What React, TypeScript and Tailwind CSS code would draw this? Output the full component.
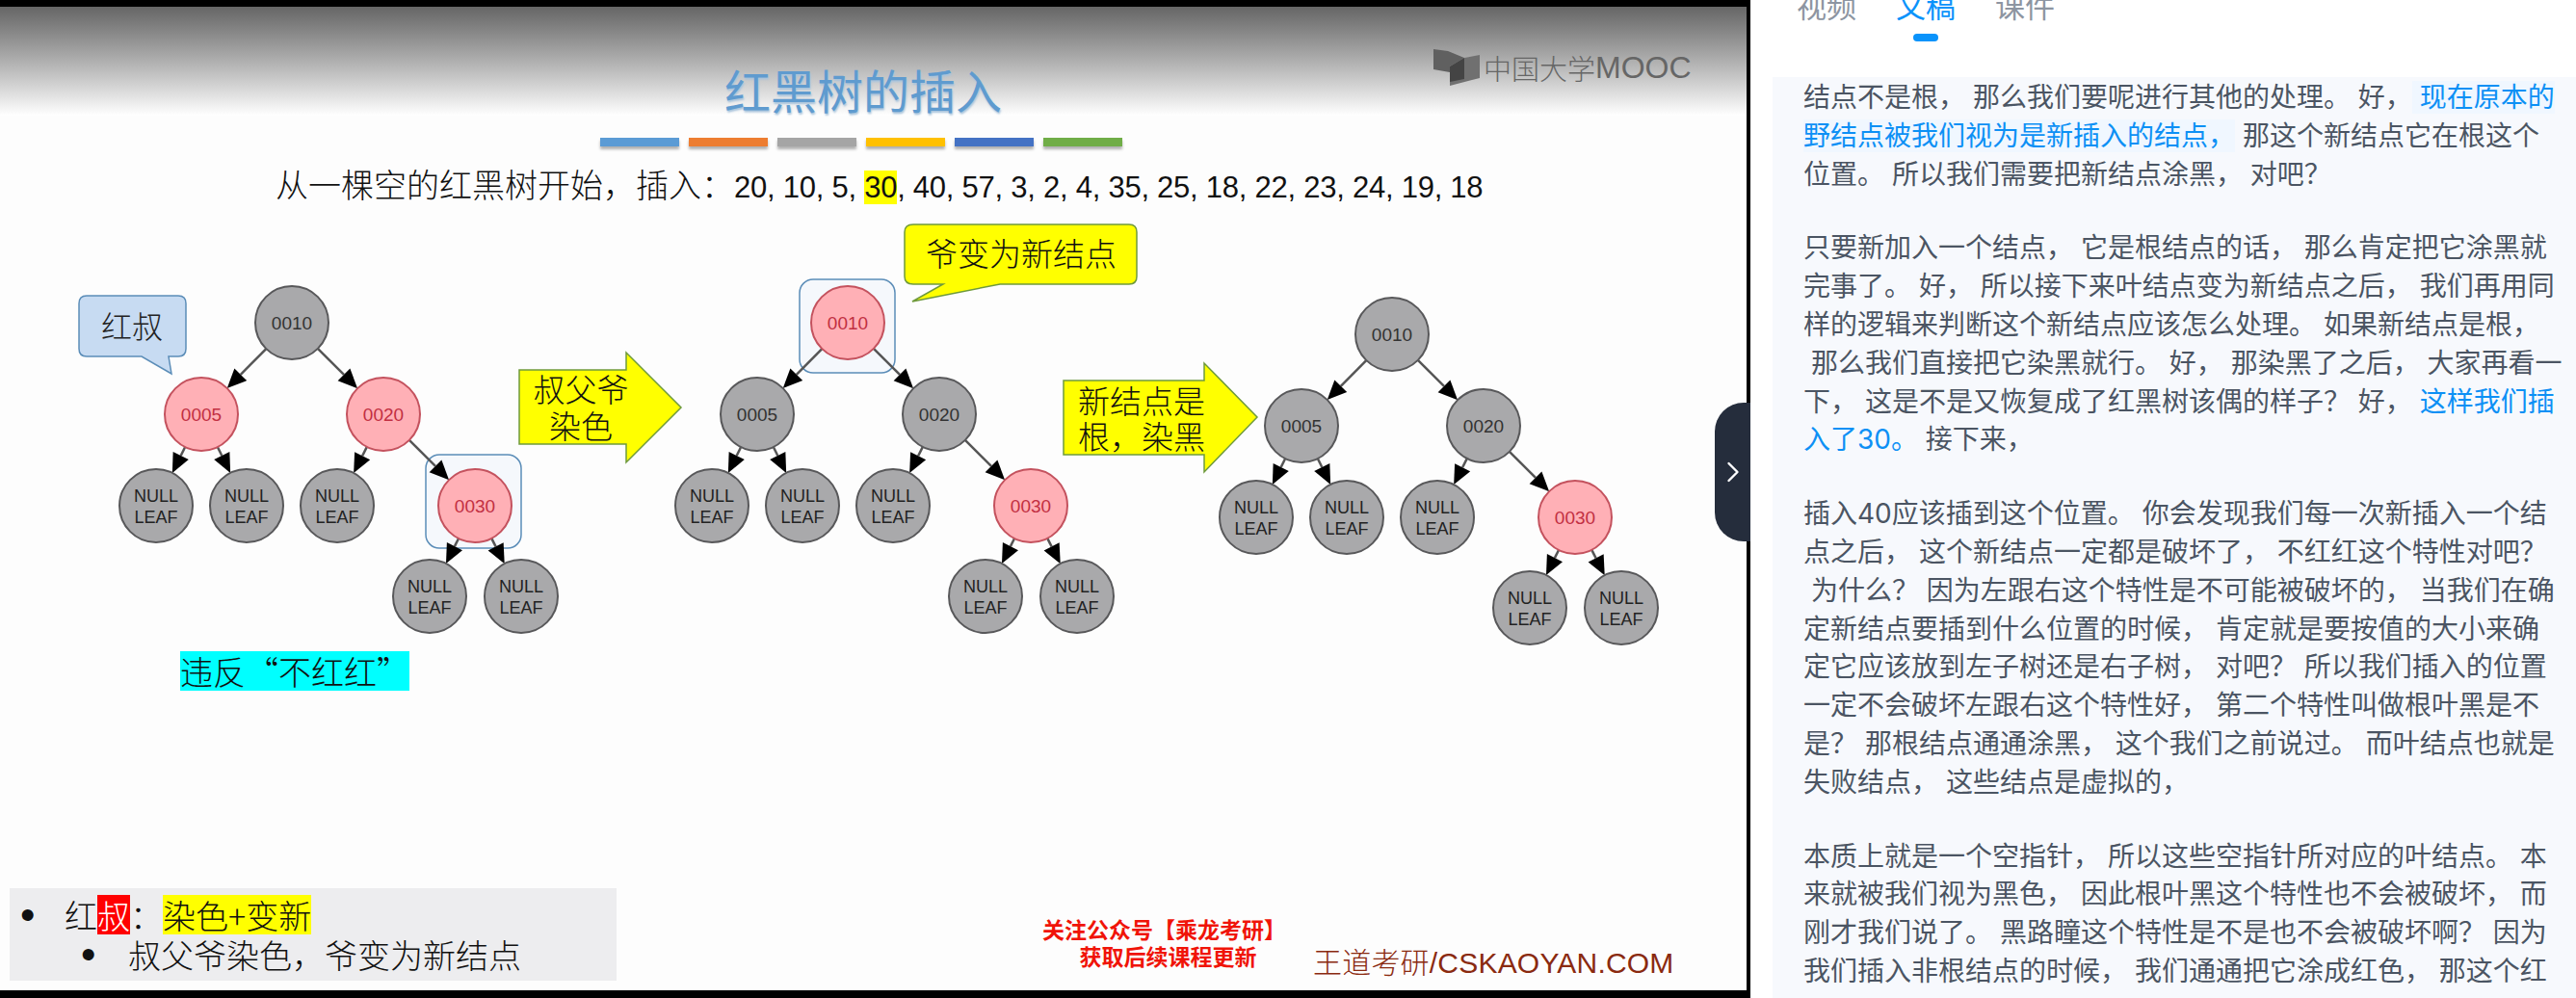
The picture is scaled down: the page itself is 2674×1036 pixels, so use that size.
import { ChevronRight } from "lucide-react";

const CJK = "font-['Noto_Sans_CJK_SC',sans-serif]";
const BODY = "font-['Inter','Noto_Sans_CJK_SC',sans-serif]";
const LATIN = "font-['Liberation_Sans','Noto_Sans_CJK_SC',sans-serif]";

const BARS = ["bg-[#5b9bd5]", "bg-[#ed7d31]", "bg-[#a5a5a5]", "bg-[#ffc000]", "bg-[#4472c4]", "bg-[#70ad47]"];

const R = 38;

// offsets from the root, the three trees share one shape
const TREE = [
  { id: "0010", x: 0, y: 0 },
  { id: "0005", x: -94, y: 95, parent: "0010" },
  { id: "0020", x: 95, y: 95, parent: "0010" },
  { id: "a", x: -141, y: 190, parent: "0005", leaf: true },
  { id: "b", x: -47, y: 190, parent: "0005", leaf: true },
  { id: "c", x: 47, y: 190, parent: "0020", leaf: true },
  { id: "0030", x: 190, y: 190, parent: "0020" },
  { id: "d", x: 143, y: 284, parent: "0030", leaf: true },
  { id: "e", x: 238, y: 284, parent: "0030", leaf: true },
];

// ascii punctuation to the full-width forms the transcript uses
function zh(s: string) {
  return s.replaceAll(",", "\uFF0C").replaceAll("?", "\uFF1F").replaceAll(":", "\uFF1A");
}

function Edge({ x1, y1, x2, y2 }: { x1: number; y1: number; x2: number; y2: number }) {
  const len = Math.hypot(x2 - x1, y2 - y1);
  const ux = (x2 - x1) / len;
  const uy = (y2 - y1) / len;
  const tipX = x2 - ux * R;
  const tipY = y2 - uy * R;
  const baseX = tipX - ux * 20;
  const baseY = tipY - uy * 20;
  const head = `${tipX},${tipY} ${baseX - uy * 9},${baseY + ux * 9} ${baseX + uy * 9},${baseY - ux * 9}`;
  return (
    <g>
      <line x1={x1 + ux * R} y1={y1 + uy * R} x2={baseX} y2={baseY} stroke="#555" strokeWidth={2.5} />
      <polygon points={head} fill="#000" />
    </g>
  );
}

function Tree({ x, y, red }: { x: number; y: number; red: string[] }) {
  return (
    <g>
      {TREE.filter((n) => n.parent).map((n) => {
        const p = TREE.find((m) => m.id === n.parent)!;
        return <Edge key={n.id} x1={x + p.x} y1={y + p.y} x2={x + n.x} y2={y + n.y} />;
      })}
      {TREE.map((n) => {
        const isRed = red.includes(n.id);
        const cx = x + n.x;
        const cy = y + n.y;
        return (
          <g key={n.id}>
            <circle cx={cx} cy={cy} r={R} fill={isRed ? "#ffb0b6" : "#a9a9ab"} stroke={isRed ? "#c4525e" : "#58585a"} strokeWidth={2} />
            {n.leaf ? (
              <text textAnchor="middle" className={`${LATIN} text-[18px]`} fill="#222">
                <tspan x={cx} y={cy - 4}>NULL</tspan>
                <tspan x={cx} y={cy + 18}>LEAF</tspan>
              </text>
            ) : (
              <text x={cx} y={cy + 7} textAnchor="middle" className={`${LATIN} text-[19px]`} fill={isRed ? "#c22f42" : "#333"}>
                {n.id}
              </text>
            )}
          </g>
        );
      })}
    </g>
  );
}

function Diagram() {
  return (
    <svg className="absolute left-0 top-0" width={1813} height={1036}>
      {/* selection boxes */}
      <rect x={442} y={472} width={99} height={97} rx={14} fill="#f5f8fc" stroke="#5b8db8" strokeWidth={1.5} />
      <rect x={830} y={290} width={99} height={97} rx={14} fill="#f5f8fc" stroke="#5b8db8" strokeWidth={1.5} />

      <Tree x={303} y={335} red={["0005", "0020", "0030"]} />
      <Tree x={880} y={335} red={["0010", "0030"]} />
      <Tree x={1445} y={347} red={["0030"]} />

      {/* callouts */}
      <path
        d="M90 307H185Q193 307 193 315V362Q193 370 185 370H175L178 388L147 370H90Q82 370 82 362V315Q82 307 90 307Z"
        fill="#c7dbf2"
        stroke="#5b8db8"
        strokeWidth={1.5}
      />
      <text x={137} y={351} textAnchor="middle" className={`${CJK} text-[32px] font-light`} fill="#222">红叔</text>

      <path
        d="M948 233H1172Q1180 233 1180 241V287Q1180 295 1172 295H1038L947 313L979 295H948Q939 295 939 287V241Q939 233 948 233Z"
        fill="#ffff00"
        stroke="#6f9a3c"
        strokeWidth={1.5}
      />
      <text x={1060} y={276} textAnchor="middle" className={`${CJK} text-[33px] font-light`} fill="#111">爷变为新结点</text>

      {/* block arrows */}
      <polygon points="539,384 650,384 650,366 707,423 650,480 650,461 539,461" fill="#ffff00" stroke="#6f9a3c" strokeWidth={1.5} />
      <text textAnchor="middle" className={`${CJK} text-[33px] font-light`} fill="#111">
        <tspan x={603} y={417}>叔父爷</tspan>
        <tspan x={603} y={455}>染色</tspan>
      </text>

      <polygon points="1104,395 1250,395 1250,377 1305,433 1250,490 1250,472 1104,472" fill="#ffff00" stroke="#6f9a3c" strokeWidth={1.5} />
      <text textAnchor="middle" className={`${CJK} text-[33px] font-light`} fill="#111">
        <tspan x={1185} y={429}>新结点是</tspan>
        <tspan x={1185} y={466}>{zh("根,染黑")}</tspan>
      </text>
    </svg>
  );
}

function MoocLogo() {
  return (
    <div className="absolute left-[1488px] top-[43px] flex items-center gap-[3px] text-[#666]">
      <svg width={49} height={40} viewBox="0 0 49 40">
        <polygon points="0,1 15,3 32,10 17,19 17,25 0,22" fill="#606060" />
        <polygon points="48,7 48,31 17,39 17,19 32,10" fill="#707070" />
        <polygon points="32,10 32,32 17,35 17,19" fill="#444" />
      </svg>
      <span className={`${CJK} text-[29px] font-light leading-[34px]`}>中国大学</span>
      <span className={`${LATIN} -ml-[3px] text-[32px] leading-[34px]`}>MOOC</span>
    </div>
  );
}

function Slide() {
  return (
    <div className="relative flex h-full flex-col justify-between overflow-hidden bg-[#fdfdfd]">
      <div className="absolute inset-x-0 top-0 h-[113px] bg-linear-to-b from-[#666] to-white" />

      <div className="relative flex flex-col items-start">
        <h1 className={`${CJK} ml-[752px] mt-[61px] text-[48px] font-normal leading-[48px] text-[#5f9bcf] [text-shadow:1px_2px_2px_#a9c4dc]`}>
          红黑树的插入
        </h1>
        <div className="ml-[623px] mt-[27px] flex gap-[10px]">
          {BARS.map((c) => (
            <div key={c} className={`h-[9px] w-[82px] shadow-[0_3px_3px_#b0b0b0] ${c}`} />
          ))}
        </div>
        <p className={`${LATIN} ml-[286px] mt-[18px] whitespace-nowrap text-[31px] leading-[42px] tracking-[-0.25px] text-[#111]`}>
          <span className={`${CJK} text-[34px] font-light tracking-normal`}>{zh("从一棵空的红黑树开始,插入:")}</span>
          20, 10, 5, <span className="bg-[#ffff00]">30</span>, 40, 57, 3, 2, 4, 35, 25, 18, 22, 23, 24, 19, 18
        </p>
      </div>

      <MoocLogo />

      <div className={`${CJK} absolute left-[187px] top-[669px] h-[41px] whitespace-nowrap bg-[#00ffff] text-[34px] font-light leading-[41px] text-[#111]`}>
        违反“不红红”
      </div>

      <div className="relative flex items-end">
        <div className={`${CJK} mb-[10px] ml-[10px] h-[96px] w-[630px] bg-[#ededef] pt-[7px] text-[34px] font-light leading-[41px] text-[#111]`}>
          <div className="flex">
            <span className={`${LATIN} ml-[11px] w-[46px] text-[44px]`}>•</span>
            <span>红</span>
            <span className="bg-[#ff0000] text-white">叔</span>
            <span>{zh(":")}</span>
            <span className="bg-[#ffff00]">染色+变新</span>
          </div>
          <div className="flex">
            <span className={`${LATIN} ml-[74px] w-[49px] text-[44px]`}>•</span>
            <span>{zh("叔父爷染色,爷变为新结点")}</span>
          </div>
        </div>
        <div className={`${CJK} mb-[22px] ml-[442px] text-center text-[23px] font-bold leading-[28px] text-[#f01408]`}>
          关注公众号【乘龙考研】
          <br />
          <span className="ml-[8px]">获取后续课程更新</span>
        </div>
        <div className={`${LATIN} mb-[10px] ml-[28px] whitespace-nowrap text-[30px] leading-[36px] tracking-[0.2px] text-[#8a2a10]`}>
          <span className={`${CJK} font-light`}>王道考研</span>/CSKAOYAN.COM
        </div>
      </div>
    </div>
  );
}

function Tabs() {
  return (
    <div className={`${BODY} -mt-[13px] ml-[48px] flex gap-[41px] text-[31px] leading-[40px] text-[#8d95a1]`}>
      <div>视频</div>
      <div className="flex flex-col items-center text-[#0a93fb]">
        文稿
        <div className="mt-[8px] h-[8px] w-[26px] rounded-full bg-[#0a93fb]" />
      </div>
      <div>课件</div>
    </div>
  );
}

function Transcript() {
  const blue = "text-[#0d90f5]";
  return (
    <div className={`${BODY} ml-[23px] mt-[37px] min-h-0 flex-1 overflow-hidden bg-[#f7f9fd] pl-[32px] pt-[2px] text-[28px] leading-[39.8px] text-[#4b5563]`}>
      <p className="mb-[37px] whitespace-pre">
        {zh("结点不是根, 那么我们要呢进行其他的处理。 好,")}
        <span className={`${blue} bg-[#f0f7ff]`}>{zh(" 现在原本的\n野结点被我们视为是新插入的结点,")}</span>
        {zh(" 那这个新结点它在根这个\n位置。 所以我们需要把新结点涂黑, 对吧?")}
      </p>
      <p className="mb-[37px] whitespace-pre">
        {zh("只要新加入一个结点, 它是根结点的话, 那么肯定把它涂黑就\n完事了。 好, 所以接下来叶结点变为新结点之后, 我们再用同\n样的逻辑来判断这个新结点应该怎么处理。 如果新结点是根,\n 那么我们直接把它染黑就行。 好, 那染黑了之后, 大家再看一\n下, 这是不是又恢复成了红黑树该偶的样子? 好,")}
        <span className={blue}>{" 这样我们插\n入了30。"}</span>
        {zh(" 接下来,")}
      </p>
      <p className="mb-[37px] whitespace-pre">
        {zh("插入40应该插到这个位置。 你会发现我们每一次新插入一个结\n点之后, 这个新结点一定都是破坏了, 不红红这个特性对吧?\n 为什么? 因为左跟右这个特性是不可能被破坏的, 当我们在确\n定新结点要插到什么位置的时候, 肯定就是要按值的大小来确\n定它应该放到左子树还是右子树, 对吧? 所以我们插入的位置\n一定不会破坏左跟右这个特性好, 第二个特性叫做根叶黑是不\n是? 那根结点通通涂黑, 这个我们之前说过。 而叶结点也就是\n失败结点, 这些结点是虚拟的,")}
      </p>
      <p className="whitespace-pre">
        {zh("本质上就是一个空指针, 所以这些空指针所对应的叶结点。 本\n来就被我们视为黑色, 因此根叶黑这个特性也不会被破坏, 而\n刚才我们说了。 黑路瞳这个特性是不是也不会被破坏啊? 因为\n我们插入非根结点的时候, 我们通通把它涂成红色, 那这个红")}
      </p>
    </div>
  );
}

export default function App() {
  return (
    <div className="flex h-screen w-full overflow-hidden bg-white">
      {/* video */}
      <div className="relative w-[1817px] shrink-0 bg-black pb-[8px] pr-[4px] pt-[7px]">
        <Slide />
        <Diagram />
        <button className="absolute right-0 top-[418px] flex h-[144px] w-[37px] items-center justify-center rounded-l-[30px] bg-[#252d3c] text-white">
          <ChevronRight className="h-[36px] w-[36px]" strokeWidth={1.6} />
        </button>
      </div>

      {/* side panel */}
      <div className="flex min-w-0 flex-1 flex-col">
        <Tabs />
        <Transcript />
      </div>
    </div>
  );
}
